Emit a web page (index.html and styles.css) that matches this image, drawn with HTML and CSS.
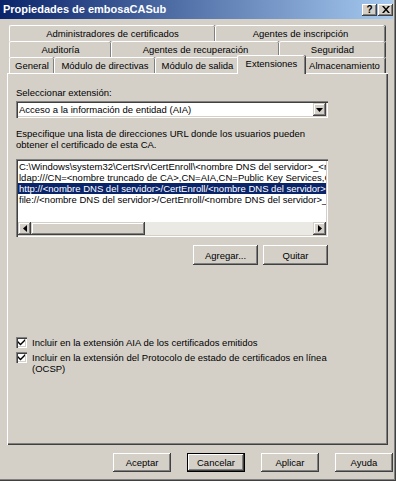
FILE: index.html
```html
<!DOCTYPE html>
<html lang="es">
<head>
  <meta charset="UTF-8" />
  <title>Propiedades de embosaCASub</title>
  <link rel="stylesheet" href="styles.css">
</head>
<body>
  <div class="window">
    <div class="titlebar">
      <span class="title">Propiedades de embosaCASub</span>
      <span class="tbtn help">?</span>
      <span class="tbtn close">
        <svg width="8" height="7" viewBox="0 0 8 7"><path d="M0 0h2l2 2.5L6 0h2L5 3.5 8 7H6L4 4.5 2 7H0l3-3.5z" fill="#000"/></svg>
      </span>
    </div>

    <div class="tabs">
      <div class="tabrow">
        <div class="tab t-admin">Administradores de certificados</div>
        <div class="tab t-insc">Agentes de inscripción</div>
      </div>
      <div class="tabrow">
        <div class="tab t-audit">Auditoría</div>
        <div class="tab t-recup">Agentes de recuperación</div>
        <div class="tab t-seg">Seguridad</div>
      </div>
      <div class="tabrow">
        <div class="tab t-gen">General</div>
        <div class="tab t-dir">Módulo de directivas</div>
        <div class="tab t-sal">Módulo de salida</div>
        <div class="tab t-ext selected">Extensiones</div>
        <div class="tab t-alm">Almacenamiento</div>
      </div>
    </div>

    <div class="panel">
      <div class="panel-body">
        <div class="label">Seleccionar extensión:</div>
        <div class="combo">
          <span class="combo-text">Acceso a la información de entidad (AIA)</span>
          <span class="combo-btn"><svg width="7" height="4" viewBox="0 0 7 4"><path d="M0 0h7L3.5 4z" fill="#000"/></svg></span>
        </div>

        <p class="desc">Especifique una lista de direcciones URL donde los usuarios pueden obtener el certificado de esta CA.</p>

        <div class="listbox">
          <div class="items">
            <div class="item">C:\Windows\system32\CertSrv\CertEnroll\&lt;nombre DNS del servidor&gt;_&lt;nombre de CA&gt;&lt;nombre de certificado&gt;.crt</div>
            <div class="item">ldap:///CN=&lt;nombre truncado de CA&gt;,CN=AIA,CN=Public Key Services,CN=Services,&lt;nombre de configuración&gt;</div>
            <div class="item active">http://&lt;nombre DNS del servidor&gt;/CertEnroll/&lt;nombre DNS del servidor&gt;</div>
            <div class="item">file://&lt;nombre DNS del servidor&gt;/CertEnroll/&lt;nombre DNS del servidor&gt;_&lt;nombre de CA&gt;&lt;nombre de certificado&gt;.crt</div>
          </div>
          <div class="hscroll">
            <span class="sbtn"><svg width="4" height="7" viewBox="0 0 4 7"><path d="M4 0v7L0 3.5z" fill="#000"/></svg></span>
            <span class="track"><span class="thumb"></span></span>
            <span class="sbtn"><svg width="4" height="7" viewBox="0 0 4 7"><path d="M0 0v7l4-3.5z" fill="#000"/></svg></span>
          </div>
        </div>

        <div class="list-actions">
          <button class="btn">Agregar...</button>
          <button class="btn">Quitar</button>
        </div>

        <label class="check">
          <span class="box"><svg width="7" height="7" viewBox="0 0 7 7"><path d="M0 2l2.5 2.5L7 0v2L2.5 6.5 0 4z" fill="#000"/></svg></span>
          <span>Incluir en la extensión AIA de los certificados emitidos</span>
        </label>
        <label class="check">
          <span class="box"><svg width="7" height="7" viewBox="0 0 7 7"><path d="M0 2l2.5 2.5L7 0v2L2.5 6.5 0 4z" fill="#000"/></svg></span>
          <span>Incluir en la extensión del Protocolo de estado de certificados en línea (OCSP)</span>
        </label>
      </div>
    </div>

    <div class="footer">
      <button class="btn wide">Aceptar</button>
      <button class="btn wide default">Cancelar</button>
      <button class="btn wide">Aplicar</button>
      <button class="btn wide">Ayuda</button>
    </div>
  </div>
</body>
</html>
```

FILE: styles.css
```css
body {
  margin: 0;
  font-family: "Liberation Sans", Arial, sans-serif;
  font-size: 9.5px;
  line-height: 11px;
  color: #000;
  background: #d4d0c8;
}
.window {
  width: 396px;
  height: 481px;
  box-sizing: border-box;
  padding: 0 3px 0 0;
  background: #d4d0c8;
  box-shadow: inset -1px -1px #404040, inset -2px -2px #808080;
}
.titlebar {
  height: 19px;
  display: flex;
  align-items: center;
  padding-left: 3px;
  background: linear-gradient(to right, #0a246a, #a6caf0);
}
.title {
  flex: 1;
  color: #fff;
  font-weight: bold;
  font-size: 11px;
}
.tbtn {
  width: 15px;
  height: 12px;
  display: flex;
  align-items: center;
  justify-content: center;
  background: #d4d0c8;
  box-shadow: inset -1px -1px #404040, inset 1px 1px #fff, inset -2px -2px #808080;
  font-weight: bold;
  font-size: 10px;
}
.help { margin-right: 1px; }

/* tabs */
.tabs {
  margin-top: 6px;
  padding-left: 9px;
}
.tabrow {
  display: flex;
  height: 16px;
}
.tab {
  box-sizing: border-box;
  height: 16px;
  text-align: center;
  line-height: 16px;
  background: #d4d0c8;
  border-top: 1px solid #fff;
  border-left: 1px solid #fff;
  border-radius: 2px 2px 0 0;
  box-shadow: inset -1px 0 #808080, 1px 0 #404040;
  white-space: nowrap;
}
.t-admin { width: 206px; }
.t-insc { width: 170px; }
.t-audit { width: 102px; }
.t-recup { width: 168px; }
.t-seg { width: 106px; }
.t-gen { width: 45px; }
.t-dir { width: 101px; }
.t-sal { width: 84px; }
.t-alm { width: 82px; }
.t-ext { width: 64px; }
.tab.selected {
  position: relative;
  z-index: 2;
  width: 68px;
  height: 19px;
  margin: -2px -2px -1px;
  line-height: 15px;
}

/* panel */
.panel {
  position: relative;
  z-index: 1;
  margin-left: 7px;
  width: 381px;
  height: 372px;
  box-sizing: border-box;
  box-shadow: inset 1px 1px #fff, inset -1px -1px #404040, inset -2px -2px #808080;
}
.panel-body {
  width: 312px;
  padding: 14px 0 0 9px;
}
.label { height: 11px; }
.combo {
  margin-top: 3px;
  height: 17px;
  box-sizing: border-box;
  display: flex;
  align-items: center;
  background: #fff;
  box-shadow: inset 1px 1px #808080, inset 2px 2px #404040, inset -1px -1px #fff, inset -2px -2px #d4d0c8;
  padding: 2px;
}
.combo-text {
  flex: 1;
  padding-left: 1px;
}
.combo-btn {
  width: 13px;
  height: 13px;
  display: flex;
  align-items: center;
  justify-content: center;
  background: #d4d0c8;
  box-shadow: inset -1px -1px #404040, inset 1px 1px #d4d0c8, inset -2px -2px #808080, inset 2px 2px #fff;
}
.desc {
  margin: 10px 0 0;
  width: 300px;
}
.listbox {
  margin-top: 9px;
  height: 78px;
  box-sizing: border-box;
  padding: 2px;
  display: flex;
  flex-direction: column;
  background: #fff;
  box-shadow: inset 1px 1px #808080, inset 2px 2px #404040, inset -1px -1px #fff, inset -2px -2px #d4d0c8;
}
.items {
  flex: 1;
  overflow: hidden;
}
.item {
  white-space: nowrap;
  overflow: hidden;
  text-overflow: clip;
  padding-left: 1px;
}
.item.active {
  background: #0a246a;
  color: #fff;
}
.hscroll {
  display: flex;
  height: 13px;
}
.sbtn {
  width: 13px;
  height: 13px;
  display: flex;
  align-items: center;
  justify-content: center;
  background: #d4d0c8;
  box-shadow: inset -1px -1px #404040, inset 1px 1px #d4d0c8, inset -2px -2px #808080, inset 2px 2px #fff;
}
.track {
  flex: 1;
  background: #ebe9e4;
}
.thumb {
  display: block;
  width: 114px;
  height: 13px;
  background: #d4d0c8;
  box-shadow: inset -1px -1px #404040, inset 1px 1px #d4d0c8, inset -2px -2px #808080, inset 2px 2px #fff;
}
.list-actions {
  margin-top: 8px;
  display: flex;
  justify-content: flex-end;
  gap: 5px;
}
.btn {
  width: 65px;
  height: 20px;
  padding: 0;
  font: inherit;
  color: #000;
  border: none;
  background: #d4d0c8;
  box-shadow: inset -1px -1px #404040, inset 1px 1px #fff, inset -2px -2px #808080, inset 2px 2px #d4d0c8;
}
.btn.wide { width: 58px; height: 19px; }
.btn.default {
  box-shadow: inset 0 0 0 1px #000, inset -2px -2px #404040, inset 2px 2px #fff, inset -3px -3px #808080;
}
.check {
  display: flex;
  align-items: flex-start;
  gap: 5px;
  margin-top: 4px;
  width: 330px;
}
.list-actions + .check { margin-top: 72px; }
.box {
  flex: none;
  width: 11px;
  height: 11px;
  box-sizing: border-box;
  display: flex;
  align-items: center;
  justify-content: center;
  background: #fff;
  box-shadow: inset 1px 1px #808080, inset 2px 2px #404040, inset -1px -1px #fff, inset -2px -2px #d4d0c8;
}
.footer {
  margin-top: 8px;
  display: flex;
  justify-content: flex-end;
  gap: 16px;
}
```
